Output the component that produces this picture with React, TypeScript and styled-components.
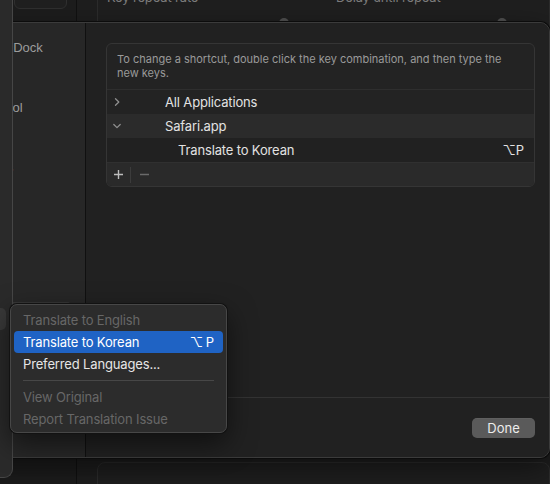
import React from "react";
import styled, { createGlobalStyle } from "styled-components";

const Global = createGlobalStyle`
  html, body { margin: 0; padding: 0; background: #1c1c1c; }
  body {
    font-family: Inter, "Noto Sans", "DejaVu Sans", sans-serif;
    -webkit-font-smoothing: antialiased;
  }
  #root { width: 550px; height: 484px; }
`;

const Stage = styled.div`
  position: relative;
  width: 550px;
  height: 484px;
  overflow: hidden;
  background: #1c1c1c;
  font-size: 13px;
  letter-spacing: -0.15px;
`;

/* ---------- background settings window ---------- */
const SettingsWindow = styled.div`
  display: grid;
  grid-template-columns: 77px 1fr;
  height: 100%;
`;

const SettingsSidebar = styled.div`
  background: #1d1d1d;
  border-right: 1px solid #111;
  padding-left: 14px;
  padding-right: 9px;
`;

const SidebarField = styled.div`
  margin-top: -20px;
  height: 27px;
  border: 1px solid #303030;
  border-radius: 6px;
  background: #202020;
`;

const SettingsContent = styled.div`
  display: flex;
  flex-direction: column;
  justify-content: space-between;
  background: #1e1e1e;
  padding-left: 20px;
`;

const GroupBox = styled.div<{ $edge: "top" | "bottom" }>`
  border: 1px solid #2c2c2c;
  border-radius: 8px;
  background: #1f1f1f;
  ${(p) =>
    p.$edge === "top"
      ? "margin-top: -24px; height: 60px;"
      : "margin-bottom: -24px; height: 44px;"}
`;

const SliderRow = styled.div`
  display: grid;
  grid-template-columns: 229px 1fr;
  padding: 12px 0 0 9px;
`;

const SliderCol = styled.div`
  display: flex;
  flex-direction: column;
`;

const SliderLabel = styled.span`
  color: #7c7c7c;
  line-height: 16px;
`;

const Track = styled.div<{ $knobAt: number }>`
  margin-top: 13px;
  height: 10px;
  display: flex;
  padding-left: ${(p) => p.$knobAt}px;
`;

const Knob = styled.span`
  width: 10px;
  height: 10px;
  border-radius: 50%;
  background: #4f4f4f;
`;

/* ---------- left window edge (in front) ---------- */
const EdgeWindow = styled.div`
  position: absolute;
  left: -200px;
  top: -10px;
  width: 213px;
  height: 488px;
  background: #2a2a2a;
  border-right: 1px solid #464646;
  border-bottom: 1px solid #464646;
  border-bottom-right-radius: 9px;
  box-sizing: border-box;
  padding-top: 318px;
  z-index: 2;
`;

const EdgeSelected = styled.div`
  height: 22px;
  margin-right: 6px;
  border-radius: 5px;
  background: #393939;
`;

/* ---------- sheet ---------- */
const Sheet = styled.div`
  position: absolute;
  left: -100px;
  top: 22px;
  width: 650px;
  height: 436px;
  box-sizing: border-box;
  border: 1px solid #3b3b3b;
  border-radius: 10px;
  box-shadow: 0 0 0 1px #0c0c0c, 0 10px 30px rgba(0, 0, 0, 0.5);
  display: grid;
  grid-template-columns: 185px 1fr;
  overflow: hidden;
  z-index: 1;
`;

const SheetSidebar = styled.div`
  background: #272727;
  border-right: 1px solid #101010;
  padding-top: 9px;
  display: flex;
  flex-direction: column;
`;

const NavItem = styled.div<{ $selected?: boolean }>`
  height: 30px;
  display: flex;
  align-items: center;
  padding-left: 32px;
  margin-right: 13px;
  border-radius: 5px;
  font-family: "Liberation Sans", Arial, sans-serif;
  letter-spacing: 0;
  color: #9c9c9c;
  white-space: nowrap;
  background: ${(p) => (p.$selected ? "#373737" : "transparent")};
`;

const SheetMain = styled.div`
  display: flex;
  flex-direction: column;
  background: #212121;
`;

const SheetBody = styled.div`
  flex: 1;
  padding: 20px 14px 0 20px;
`;

const Table = styled.div`
  border: 1px solid #353535;
  border-radius: 6px;
  background: #232323;
  overflow: hidden;
`;

const Hint = styled.p`
  margin: 0;
  padding: 8px 10px 9px;
  font-size: 11px;
  line-height: 14px;
  letter-spacing: 0;
  color: #9a9a9a;
  border-bottom: 1px solid #2e2e2e;
`;

const Row = styled.div<{ $tone: "base" | "alt" | "dark"; $indent?: number }>`
  height: 24px;
  display: grid;
  grid-template-columns: ${(p) => 58 + (p.$indent || 0)}px 1fr auto;
  align-items: center;
  padding-right: 10px;
  color: #e2e2e2;
  background: ${(p) =>
    p.$tone === "alt" ? "#2b2b2b" : p.$tone === "dark" ? "#212121" : "#232323"};
`;

const Disclosure = styled.span`
  display: flex;
  align-items: center;
  padding-left: 5px;
  color: #8e8e8e;
`;

const KeyCombo = styled.span`
  font-family: Inter, "DejaVu Sans", sans-serif;
  color: #e2e2e2;
  letter-spacing: 0;
`;

const TableFooter = styled.div`
  height: 23px;
  border-top: 1px solid #303030;
  background: #2a2a2a;
  display: flex;
  align-items: center;
  padding-left: 3px;
`;

const ToolButton = styled.span<{ $enabled?: boolean }>`
  width: 16px;
  height: 16px;
  display: flex;
  align-items: center;
  justify-content: center;
  color: ${(p) => (p.$enabled ? "#bdbdbd" : "#6a6a6a")};
`;

const ToolDivider = styled.span`
  width: 1px;
  height: 16px;
  margin: 0 5px 0 4px;
  background: #3c3c3c;
`;

const SheetFooter = styled.div`
  height: 59px;
  border-top: 1px solid #333;
  display: flex;
  align-items: center;
  justify-content: flex-end;
  padding-right: 14px;
`;

const DoneButton = styled.button`
  width: 63px;
  height: 20px;
  border: none;
  border-radius: 5px;
  background: #5a5a5a;
  color: #ececec;
  font: inherit;
  font-size: 13px;
  padding: 0;
  box-shadow: 0 0.5px 0 rgba(255, 255, 255, 0.08) inset;
`;

/* ---------- context menu ---------- */
const Menu = styled.div`
  position: absolute;
  left: 10px;
  top: 304px;
  width: 217px;
  box-sizing: border-box;
  padding: 4px 3px 2px;
  background: #2c2c2c;
  border: 1px solid #474747;
  border-radius: 7px;
  box-shadow: 0 0 0 1px #121212, 0 10px 28px rgba(0, 0, 0, 0.55);
  z-index: 3;
`;

const MenuItem = styled.div<{ $disabled?: boolean; $active?: boolean }>`
  height: 22px;
  display: flex;
  align-items: center;
  justify-content: space-between;
  padding: 0 9px;
  border-radius: 4px;
  white-space: nowrap;
  color: ${(p) => (p.$disabled ? "#676767" : p.$active ? "#ffffff" : "#e6e6e6")};
  background: ${(p) => (p.$active ? "#1f63c4" : "transparent")};
`;

const MenuShortcut = styled.span`
  display: flex;
  gap: 3px;
  font-family: Inter, "DejaVu Sans", sans-serif;
`;

const MenuSeparator = styled.div`
  height: 1px;
  margin: 5px 9px;
  background: #474747;
`;

const ChevronRight = () => (
  <svg width="10" height="10" viewBox="0 0 10 10" fill="none">
    <path d="M3.5 1.8 L6.8 5 L3.5 8.2" stroke="currentColor" strokeWidth="1.3" strokeLinecap="round" strokeLinejoin="round" />
  </svg>
);

const ChevronDown = () => (
  <svg width="10" height="10" viewBox="0 0 10 10" fill="none">
    <path d="M1.8 3.5 L5 6.6 L8.2 3.5" stroke="currentColor" strokeWidth="1.3" strokeLinecap="round" strokeLinejoin="round" />
  </svg>
);

const Plus = () => (
  <svg width="11" height="11" viewBox="0 0 11 11">
    <path d="M5.5 1 V10 M1 5.5 H10" stroke="currentColor" strokeWidth="1.4" />
  </svg>
);

const Minus = () => (
  <svg width="11" height="11" viewBox="0 0 11 11">
    <path d="M1 5.5 H10" stroke="currentColor" strokeWidth="1.4" />
  </svg>
);

const navItems = [
  "Launchpad & Dock",
  "Display",
  "Mission Control",
  "Keyboard",
  "Input Sources",
  "Screenshots",
  "Services",
  "Spotlight",
  "Accessibility",
  "App Shortcuts",
  "Function Keys",
  "Modifier Keys",
];

export default function App() {
  return (
    <Stage>
      <Global />
      <SettingsWindow>
        <SettingsSidebar>
          <SidebarField />
        </SettingsSidebar>
        <SettingsContent>
          <GroupBox $edge="top">
            <SliderRow>
              <SliderCol>
                <SliderLabel>Key repeat rate</SliderLabel>
                <Track $knobAt={172}>
                  <Knob />
                </Track>
              </SliderCol>
              <SliderCol>
                <SliderLabel>Delay until repeat</SliderLabel>
                <Track $knobAt={161}>
                  <Knob />
                </Track>
              </SliderCol>
            </SliderRow>
          </GroupBox>
          <GroupBox $edge="bottom" />
        </SettingsContent>
      </SettingsWindow>

      <Sheet>
        <SheetSidebar>
          {navItems.map((n) => (
            <NavItem key={n} $selected={n === "App Shortcuts"}>
              {n}
            </NavItem>
          ))}
        </SheetSidebar>
        <SheetMain>
          <SheetBody>
            <Table>
              <Hint>
                To change a shortcut, double click the key combination, and then type the new keys.
              </Hint>
              <Row $tone="base">
                <Disclosure>
                  <ChevronRight />
                </Disclosure>
                <span>All Applications</span>
                <span />
              </Row>
              <Row $tone="alt">
                <Disclosure>
                  <ChevronDown />
                </Disclosure>
                <span>Safari.app</span>
                <span />
              </Row>
              <Row $tone="dark" $indent={13}>
                <span />
                <span>Translate to Korean</span>
                <KeyCombo>⌥P</KeyCombo>
              </Row>
              <TableFooter>
                <ToolButton $enabled>
                  <Plus />
                </ToolButton>
                <ToolDivider />
                <ToolButton>
                  <Minus />
                </ToolButton>
              </TableFooter>
            </Table>
          </SheetBody>
          <SheetFooter>
            <DoneButton>Done</DoneButton>
          </SheetFooter>
        </SheetMain>
      </Sheet>

      <EdgeWindow>
        <EdgeSelected />
      </EdgeWindow>

      <Menu>
        <MenuItem $disabled>Translate to English</MenuItem>
        <MenuItem $active>
          <span>Translate to Korean</span>
          <MenuShortcut>
            <span>⌥</span>
            <span>P</span>
          </MenuShortcut>
        </MenuItem>
        <MenuItem>Preferred Languages...</MenuItem>
        <MenuSeparator />
        <MenuItem $disabled>View Original</MenuItem>
        <MenuItem $disabled>Report Translation Issue</MenuItem>
      </Menu>
    </Stage>
  );
}
